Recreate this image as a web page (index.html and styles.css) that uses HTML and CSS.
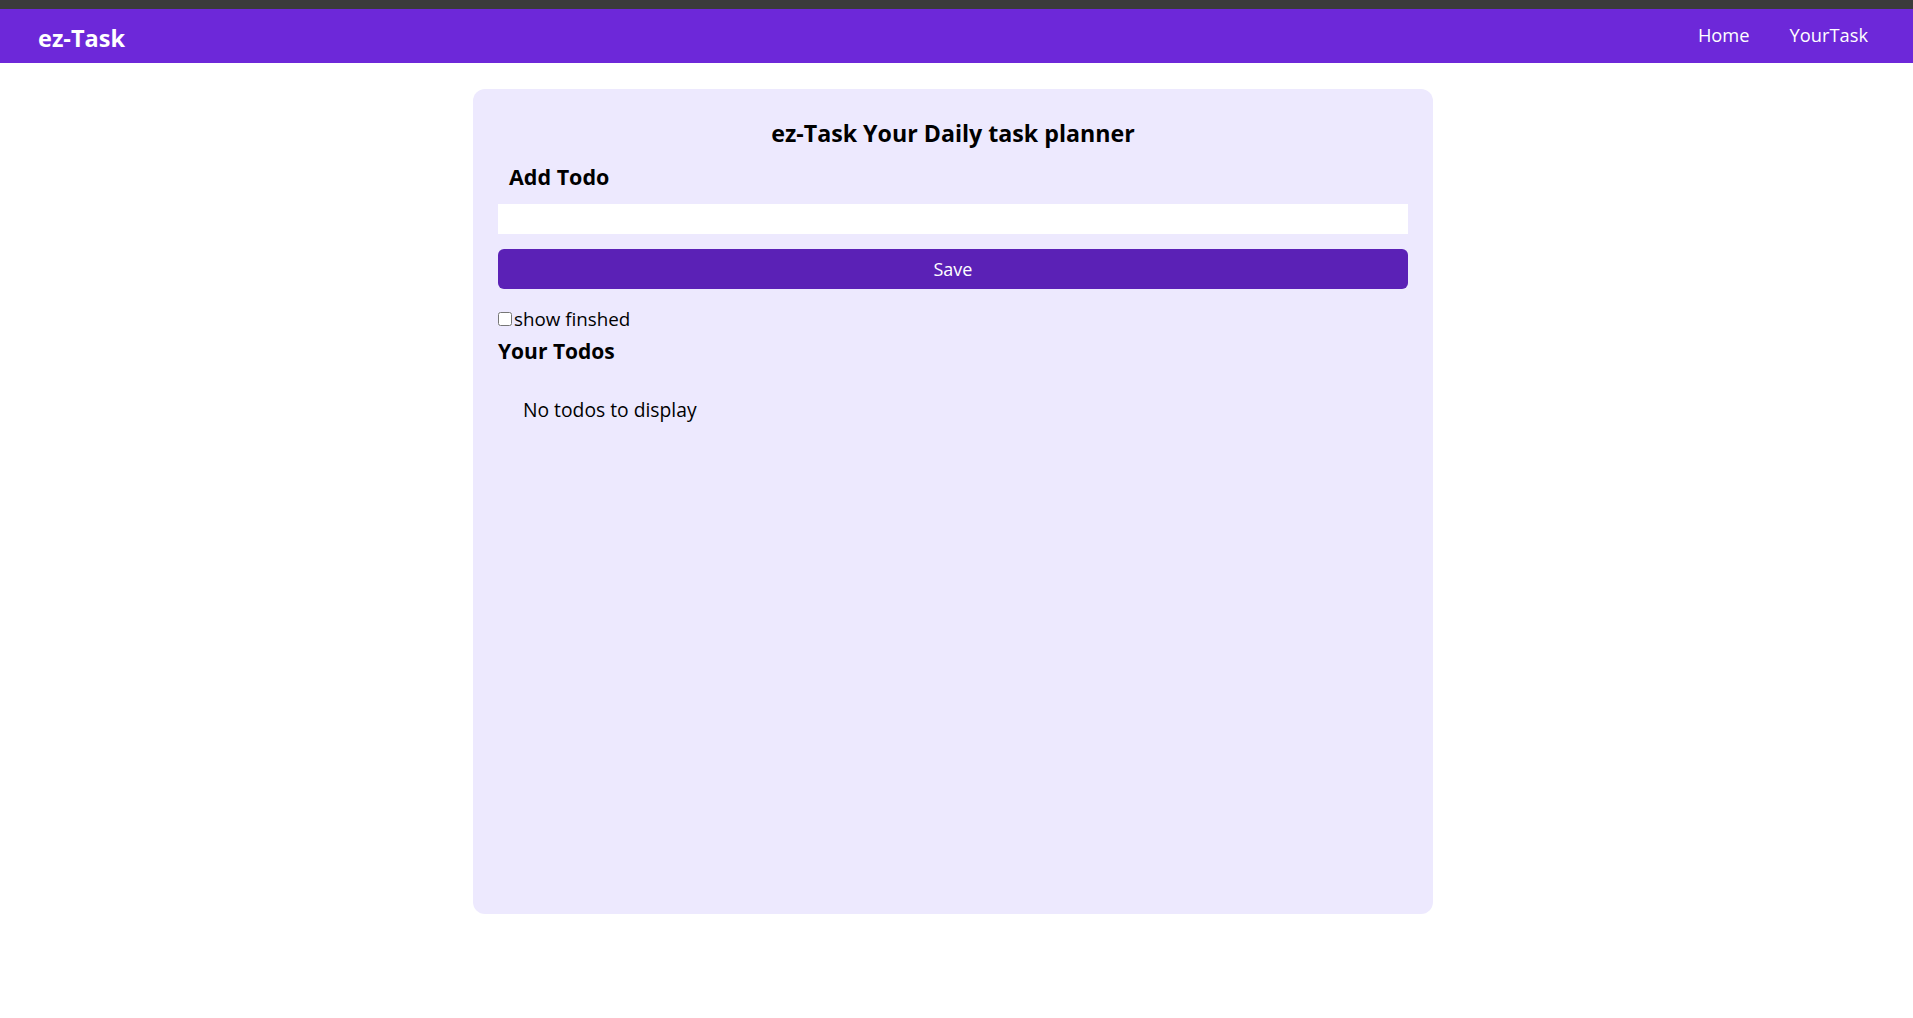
FILE: index.html
```html
<!DOCTYPE html>
<html lang="en">
<head>
<meta charset="utf-8">
<title>ez-Task</title>
<link rel="stylesheet" href="styles.css">
</head>
<body>
<div class="topstrip"></div>
<nav class="navbar">
  <div class="logo">ez-Task</div>
  <ul class="links">
    <li>Home</li>
    <li>YourTask</li>
  </ul>
</nav>
<main class="card">
  <h1 class="title">ez-Task Your Daily task planner</h1>
  <div class="add">
    <h2 class="add-title">Add Todo</h2>
    <input class="todo-input" type="text">
    <button class="save-btn">Save</button>
  </div>
  <label class="show"><input type="checkbox" class="check">show finshed</label>
  <h2 class="todos-title">Your Todos</h2>
  <div class="todos">
    <div class="empty">No todos to display</div>
  </div>
</main>
</body>
</html>
```
FILE: styles.css
```css
* { box-sizing: border-box; }
html, body { margin: 0; padding: 0; background: #ffffff; }
body { font-family: "Open Sans", "Noto Sans", sans-serif; color: #000; }

.topstrip { height: 9px; background: #3b3b3b; }

.navbar {
  height: 54px;
  background: #6d28d9;
  color: #fff;
  display: flex;
  align-items: center;
  justify-content: space-between;
  padding: 0 45px 0 38px;
}
.logo { font-size: 23.5px; font-weight: 700; line-height: 32px; margin-top: 3px; }
.links { list-style: none; margin: -3px 0 0; padding: 0; display: flex; gap: 40px; font-size: 18.3px; line-height: 24px; }

.card {
  width: 960px;
  height: 825px;
  margin: 26px 0 0 473px;
  padding: 25px;
  background: #ede9fe;
  border-radius: 12px;
}
.title { margin: 3px 0 0; text-align: center; font-size: 23.2px; font-weight: 700; line-height: 32px; }
.add { display: flex; flex-direction: column; }
.add-title { margin: 14px 0 0 11px; font-size: 21.5px; font-weight: 700; line-height: 28px; }
.todo-input { margin-top: 13px; height: 30px; width: 100%; border: none; outline: none; background: #fff; padding: 0 8px; font: inherit; }
.save-btn { margin-top: 15px; height: 40px; width: 100%; border: none; border-radius: 6px; background: #5b21b6; color: #fff; font: inherit; font-size: 18px; }
.show { display: flex; align-items: center; margin-top: 18px; font-size: 18.8px; line-height: 24px; }
.check { margin: 0 2px 0 0; width: 14px; height: 14px; }
.todos-title { margin: 6px 0 0; font-size: 21px; font-weight: 700; line-height: 28px; }
.todos { padding: 31px 25px 0; }
.empty { font-size: 19.3px; line-height: 28px; }
```
